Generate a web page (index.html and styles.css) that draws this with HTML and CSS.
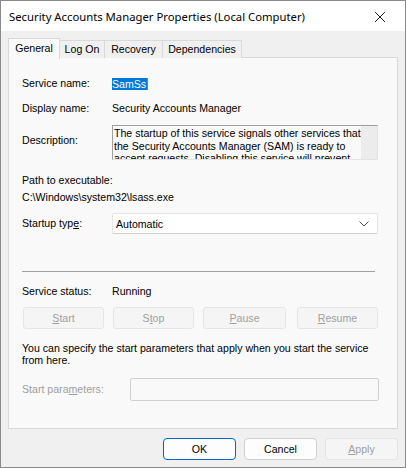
FILE: index.html
```html
<!DOCTYPE html>
<html>
<head>
<meta charset="utf-8">
<link rel="stylesheet" href="styles.css">
</head>
<body>
<div class="window">
  <div class="titlebar">
    <span class="title">Security Accounts Manager Properties (Local Computer)</span>
    <svg class="close" width="12" height="12" viewBox="0 0 12 12"><path d="M1 1 L11 11 M11 1 L1 11" stroke="#1a1a1a" stroke-width="1" fill="none"/></svg>
  </div>
  <div class="body">
    <div class="tabs">
      <div class="tab active t1">General</div>
      <div class="tab t2">Log On</div>
      <div class="tab t3">Recovery</div>
      <div class="tab t4">Dependencies</div>
    </div>
    <div class="panel">
      <div class="row r-name">
        <div class="label">Service name:</div>
        <div class="value"><span class="sel">SamSs</span><span class="caret"></span></div>
      </div>
      <div class="row r-display">
        <div class="label">Display name:</div>
        <div class="value">Security Accounts Manager</div>
      </div>
      <div class="row r-desc">
        <div class="label desc-label">Description:</div>
        <div class="descbox">
          <div class="desctext">The startup of this service signals other services that the Security Accounts Manager (SAM) is ready to accept requests.  Disabling this service will prevent other services in the system from being notified when the SAM is ready.</div>
          <div class="scroll"></div>
        </div>
      </div>
      <div class="path-label">Path to executable:</div>
      <div class="path-value">C:\Windows\system32\lsass.exe</div>
      <div class="row r-startup">
        <div class="label">Startup typ<u>e</u>:</div>
        <div class="combo">
          <span>Automatic</span>
          <svg class="chev" width="10" height="6" viewBox="0 0 10 6"><path d="M0.5 0.5 L5 5 L9.5 0.5" stroke="#5c5c5c" stroke-width="1" fill="none"/></svg>
        </div>
      </div>
      <div class="sep"></div>
      <div class="row r-status">
        <div class="label">Service status:</div>
        <div class="value">Running</div>
      </div>
      <div class="btnrow">
        <div class="btn dis b1"><u>S</u>tart</div>
        <div class="btn dis b2">S<u>t</u>op</div>
        <div class="btn dis b3"><u>P</u>ause</div>
        <div class="btn dis b4"><u>R</u>esume</div>
      </div>
      <div class="para">You can specify the start parameters that apply when you start the service from here.</div>
      <div class="row r-params">
        <div class="label gray">Start para<u>m</u>eters:</div>
        <div class="input"></div>
      </div>
    </div>
    <div class="footer">
      <div class="fbtn ok">OK</div>
      <div class="fbtn">Cancel</div>
      <div class="fbtn fdis"><u>A</u>pply</div>
    </div>
  </div>
</div>
</body>
</html>
```
FILE: styles.css
```css
* { box-sizing: border-box; }
html, body { margin: 0; padding: 0; }
body {
  width: 406px;
  height: 468px;
  overflow: hidden;
  background: #f0f0f0;
  font-family: "Liberation Sans", Arial, sans-serif;
  font-size: 10.6px;
  color: #000;
}
.window {
  width: 406px;
  height: 468px;
  border: 1px solid #8a8a8a;
  background: #f0f0f0;
  display: flex;
  flex-direction: column;
}
.titlebar {
  height: 30px;
  background: #fff;
  display: flex;
  align-items: center;
  padding-left: 8px;
  padding-right: 19px;
  justify-content: space-between;
  flex: none;
}
.title {
  font-family: "Noto Sans", sans-serif;
  font-size: 11.3px;
  color: #000;
}
.close { display: block; margin-top: 1px; }
.body {
  padding: 7px 7px 0 7px;
  flex: 1;
  display: flex;
  flex-direction: column;
}
.tabs {
  display: flex;
  height: 20px;
  align-items: flex-end;
  position: relative;
  z-index: 2;
  margin-bottom: -1px;
}
.tab {
  height: 18px;
  border: 1px solid #d9d9d9;
  border-bottom: none;
  border-left: none;
  background: #f0f0f0;
  line-height: 17px;
  text-align: center;
}
.tab.active {
  height: 21px;
  border-left: 1px solid #d9d9d9;
  background: #f9f9f9;
  line-height: 18px;
  margin-bottom: -1px;
}
.t1 { width: 52px; }
.t2 { width: 45px; }
.t3 { width: 58px; }
.t4 { width: 79px; }
.panel {
  height: 372px;
  border: 1px solid #d9d9d9;
  background: #f9f9f9;
  padding: 19px 13px 0 13px;
  display: flex;
  flex-direction: column;
}
.row { display: flex; align-items: center; }
.label { width: 90px; flex: none; line-height: 13px; }
.value { line-height: 13px; display: flex; align-items: center; }
.sel {
  background: #0078d7;
  color: #fff;
  line-height: 12px;
  padding: 0 1px 0 0;
  display: inline-block;
  height: 12px;
}
.caret { width: 1px; height: 12px; background: #c56b2a; display: inline-block; }
.r-display { margin-top: 12px; }
.r-desc { margin-top: 10px; align-items: flex-start; }
.desc-label { margin-top: 9px; }
.descbox {
  width: 266px;
  height: 35px;
  border: 1px solid #a0a0a0;
  border-right-color: #e3e3e3;
  border-bottom-color: #e3e3e3;
  background: #f9f9f9;
  display: flex;
  overflow: hidden;
}
.desctext {
  width: 249px;
  line-height: 12.5px;
  padding: 0 0 0 1px;
  margin-top: 1px;
}
.scroll { width: 16px; background: #ececec; }
.path-label { margin-top: 14px; line-height: 13px; }
.path-value { margin-top: 4px; line-height: 13px; }
.r-startup { margin-top: 9px; }
.combo {
  width: 266px;
  height: 21px;
  background: #fff;
  border: 1px solid #e5e5e5;
  border-bottom-color: #cfcfcf;
  border-radius: 2px;
  display: flex;
  align-items: center;
  justify-content: space-between;
  padding: 0 8px 0 3px;
}
.chev { display: block; }
.sep {
  margin-top: 37px;
  height: 1px;
  background: #a0a0a0;
  width: 353px;
}
.r-status { margin-top: 13px; }
.btnrow {
  margin-top: 9px;
  display: flex;
  height: 22px;
}
.btn {
  height: 22px;
  border: 1px solid #e5e5e5;
  border-radius: 3px;
  background: #f5f5f5;
  color: #a0a0a0;
  display: flex;
  align-items: center;
  justify-content: center;
}
.b1 { margin-left: 1px; width: 81px; }
.b2 { margin-left: 9px; width: 81px; }
.b3 { margin-left: 9px; width: 83px; }
.b4 { margin-left: 11px; width: 81px; }
.para { margin-top: 13px; line-height: 12px; width: 360px; }
.r-params { margin-top: 12px; }
.r-params .label { width: 108px; }
.gray { color: #a0a0a0; }
.input {
  width: 249px;
  height: 23px;
  border: 1px solid #d0d0d0;
  border-radius: 2px;
  background: #f9f9f9;
}
.footer {
  display: flex;
  justify-content: flex-end;
  gap: 8px;
  margin-top: 9px;
}
.fbtn {
  width: 73px;
  height: 22px;
  border: 1px solid #d0d0d0;
  border-radius: 4px;
  background: #fdfdfd;
  display: flex;
  align-items: center;
  justify-content: center;
}
.fbtn.ok { border-color: #0067c0; }
.fbtn.fdis { color: #a0a0a0; background: #f5f5f5; border-color: #e5e5e5; }
```
